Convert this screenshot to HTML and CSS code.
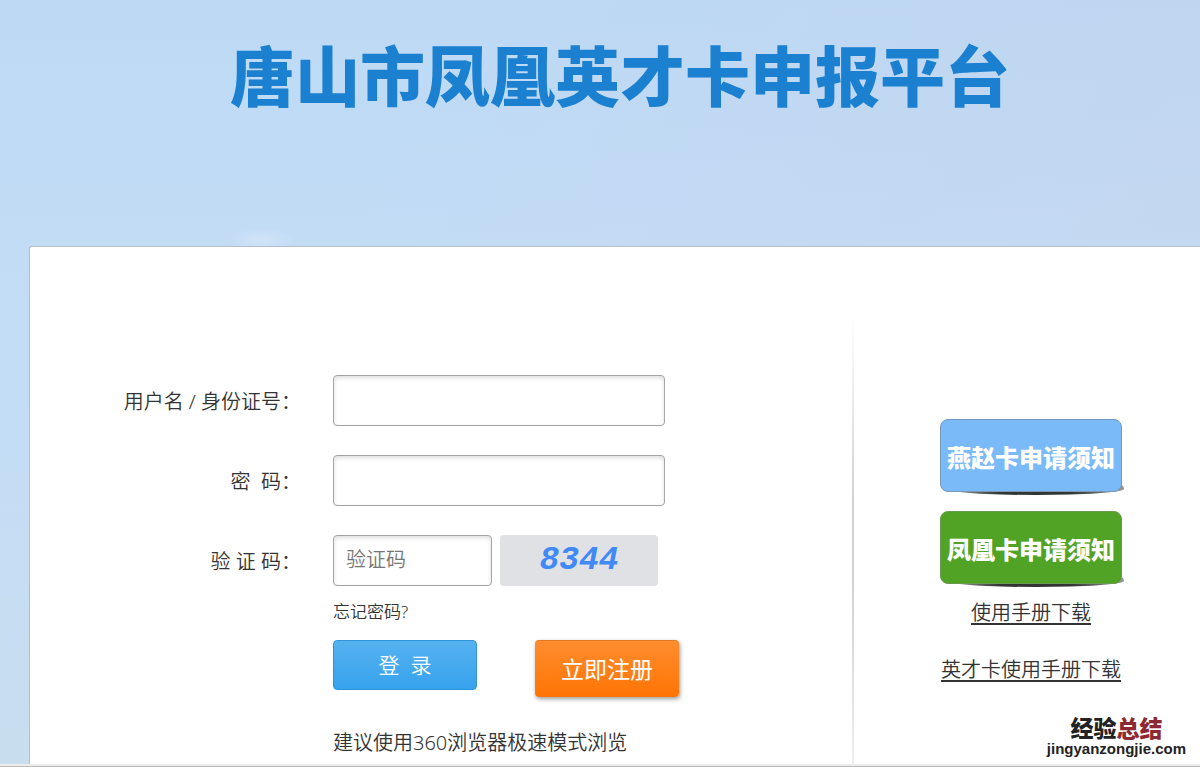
FILE: index.html
```
<!DOCTYPE html>
<html lang="zh-CN">
<head>
  <meta charset="UTF-8">
  <title>唐山市凤凰英才卡申报平台</title>
  <link rel="stylesheet" href="styles.css">
</head>
<body>

<header>
  <h1>唐山市凤凰英才卡申报平台</h1>
</header>

<main>
  <form id="loginForm" class="login">
    <label for="username">用户名 / 身份证号：</label>
    <input type="text" id="username">

    <label for="password">密&nbsp;&nbsp;码：</label>
    <input type="password" id="password">

    <label for="captcha">验 证 码：</label>
    <div class="captcha">
      <input type="text" id="captcha" placeholder="验证码">
      <button type="button" class="code">8344</button>
    </div>

    <div class="extra">
      <a href="#" class="forgot">忘记密码?</a>
      <div class="buttons">
        <button type="submit" class="btn-login">登&nbsp;&nbsp;录</button>
        <button type="button" class="btn-register">立即注册</button>
      </div>
      <p class="tip">建议使用360浏览器极速模式浏览</p>
    </div>
  </form>

  <div class="divider"></div>

  <aside>
    <a href="#" class="notice blue">燕赵卡申请须知</a>
    <a href="#" class="notice green">凤凰卡申请须知</a>
    <a href="#" class="manual">使用手册下载</a>
    <a href="#" class="manual">英才卡使用手册下载</a>
  </aside>

  <div class="watermark">
    <strong>经验<span>总结</span></strong>
    <small>jingyanzongjie.com</small>
  </div>
</main>

<footer></footer>

</body>
</html>
```
FILE: styles.css
```
* { box-sizing: border-box; }
body {
  margin: 0;
  min-height: 100vh;
  display: flex;
  flex-direction: column;
  font-family: "Noto Sans", "Noto Sans CJK SC", sans-serif;
  font-size: 20px;
  font-weight: 350;
  color: #333;
  background:
    radial-gradient(ellipse 34px 12px at 262px 240px, rgba(218, 234, 248, 0.6), transparent),
    linear-gradient(100deg, rgba(192, 220, 246, 0.5) 30%, rgba(196, 212, 238, 0.5) 90%),
    linear-gradient(#bad7f3, #c5dcf6 32%, #c7def5 60%, #d2e0e6);
}

header { height: 246px; padding: 30px 0 0 40px; text-align: center; }
h1 { margin: 0; font-size: 65px; line-height: 92px; font-weight: 900; color: #1c80d0; white-space: nowrap; }

main {
  position: relative;
  isolation: isolate;
  flex: 1;
  display: flex;
  margin-left: 29px;
  background: white;
  border: 1px solid #b9bec6;
  border-width: 1px 0 0 1px;
  border-top-left-radius: 3px;
}

.login {
  flex: 1;
  display: grid;
  grid-template-columns: 271px 332px;
  gap: 29px 32px;
  align-content: start;
  padding-top: 128px;
}
.login label { text-align: right; line-height: 53px; height: 51px; }
.login input {
  width: 100%;
  height: 51px;
  padding: 0 12px 2px;
  border: 1px solid #a5a5a5;
  border-radius: 4px;
  box-shadow: inset 0 2px 4px #ddd;
  background: white;
  font: inherit;
}
.login input::placeholder { color: #757575; }

button { padding: 0 0 3px; border: none; font: inherit; color: white; cursor: pointer; }
.captcha { display: flex; gap: 8px; }
.captcha input { width: 159px; }
.code {
  width: 158px;
  height: 51px;
  padding: 0;
  border-radius: 4px;
  background: #e0e1e5;
  color: #4189f5;
  font: italic bold 33px "Liberation Mono", monospace;
}

.extra { grid-column: 2; margin-top: -16px; }
.forgot { display: block; font-size: 17px; line-height: 26px; color: #333; text-decoration: none; }
.buttons { display: flex; align-items: flex-start; gap: 58px; margin-top: 15px; }
.buttons button { flex: none; width: 144px; border-radius: 4px; }
.btn-login {
  height: 50px;
  font-size: 21px;
  border: 1px solid #2f95d8;
  background: linear-gradient(#56b2f0, #36a2ec);
}
.btn-register {
  height: 57px;
  font-size: 23px;
  font-weight: 400;
  border-top: 1px solid #e47a20;
  background: linear-gradient(#ff8d2e, #ff7404);
  box-shadow: 1px 2px 4px rgba(0, 0, 0, 0.4);
}
.tip { margin: 31px 0 0; line-height: 30px; }

.divider {
  width: 2px;
  margin-top: 70px;
  background: linear-gradient(white, #d2d2d2 40%, #d2d2d2 60%, #eee);
}

aside {
  width: 346px;
  padding: 172px 0 0 86px;
  display: flex;
  flex-direction: column;
  align-items: flex-start;
}
.notice {
  position: relative;
  width: 182px;
  height: 73px;
  margin-bottom: 19px;
  border-radius: 8px;
  text-align: center;
  line-height: 76px;
  font-size: 24px;
  font-weight: 900;
  color: white;
  text-decoration: none;
}
/* curled shadow under the card */
.notice::after {
  content: "";
  position: absolute;
  z-index: -1;
  left: 6px;
  right: -3px;
  bottom: -4px;
  height: 10px;
  border-radius: 0 4px 50% 50% / 0 4px 6px 6px;
  background: linear-gradient(90deg, #aaa, #333 30%, #333 70%, #999);
}
.blue { background: #7abaf8; border: 1px solid #7599bd; }
.green { background: #50a324; border: 1px solid #679a50; }
.manual { width: 182px; height: 57px; line-height: 20px; text-align: center; color: #333; text-underline-offset: 3px; }

.watermark {
  position: absolute;
  right: 14px;
  bottom: 7px;
  text-align: center;
}
.watermark strong { display: block; font-size: 23px; line-height: 26px; font-weight: 900; color: #222; }
.watermark span { color: #8c2a33; }
.watermark small { display: block; font: bold 15px/16px "Liberation Sans", sans-serif; color: #222; }

footer { height: 3px; background: #ececec; border-bottom: 1px solid #bbb; }
```
